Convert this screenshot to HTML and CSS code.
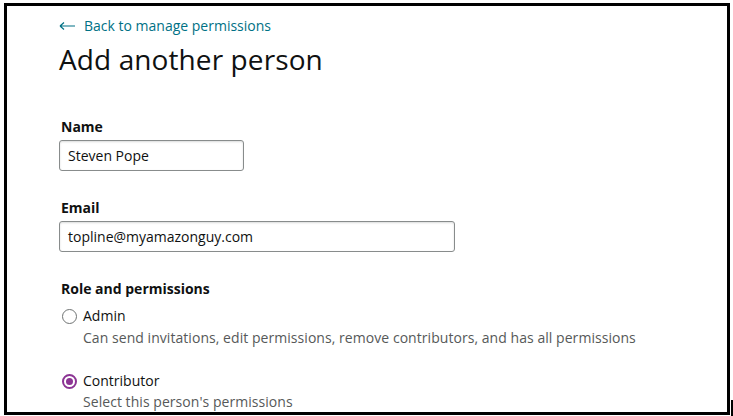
FILE: index.html
```html
<!DOCTYPE html>
<html>
<head>
<meta charset="utf-8">
<link rel="stylesheet" href="styles.css">
</head>
<body>
<div class="frame">
  <a class="back" href="#"><svg class="arrow" width="16" height="10" viewBox="0 0 16 10"><path d="M1 5H16M1 5L5 1.5M1 5L5 8.5" fill="none" stroke="#007185" stroke-width="1.2"/></svg>Back to manage permissions</a>
  <h1 class="title">Add another person</h1>
  <div class="field name-field">
    <label class="label">Name</label>
    <div class="input name-input">Steven Pope</div>
  </div>
  <div class="field email-field">
    <label class="label">Email</label>
    <div class="input email-input">topline@myamazonguy.com</div>
  </div>
  <div class="role">
    <div class="label">Role and permissions</div>
    <div class="option">
      <div class="option-row"><span class="radio"></span><span class="option-name">Admin</span></div>
      <div class="option-desc">Can send invitations, edit permissions, remove contributors, and has all permissions</div>
    </div>
    <div class="option option-second">
      <div class="option-row"><span class="radio checked"></span><span class="option-name">Contributor</span></div>
      <div class="option-desc desc-second">Select this person's permissions</div>
    </div>
  </div>
</div>
<div class="cursor-mark"></div>
</body>
</html>
```
FILE: styles.css
```css
* { box-sizing: border-box; }
html, body { margin: 0; padding: 0; background: #fff; }
body {
  width: 733px;
  height: 416px;
  overflow: hidden;
  position: relative;
  font-family: "Open Sans", "Noto Sans", sans-serif;
  color: #0f1111;
  padding: 3px 3px 1px 4px;
}
.frame {
  width: 726px;
  height: 412px;
  border: 3px solid #000;
  padding: 11px 0 0 52px;
  display: flex;
  flex-direction: column;
  overflow: hidden;
}
.back {
  color: #007185;
  text-decoration: none;
  font-size: 14px;
  line-height: 18px;
  display: flex;
  align-items: center;
}
.arrow { margin-right: 9px; }
.title {
  margin: 6px 0 0 0;
  font-size: 28px;
  font-weight: 400;
  line-height: 36px;
  letter-spacing: 0.1px;
}
.field { display: flex; flex-direction: column; }
.name-field { margin-top: 41px; }
.email-field { margin-top: 28px; }
.label {
  font-size: 14px;
  font-weight: 700;
  line-height: 18px;
  margin-left: 2px;
}
.input {
  margin-top: 4px;
  height: 31px;
  border: 1px solid #888c8c;
  border-radius: 3px;
  font-size: 14px;
  line-height: 29px;
  padding-left: 8px;
  box-shadow: 0 1px 2px rgba(15,17,17,.15) inset;
}
.name-input { width: 185px; }
.email-input { width: 396px; }
.role { margin-top: 28px; display: flex; flex-direction: column; }
.option { margin-top: 8px; }
.option-second { margin-top: 23px; }
.option-row { display: flex; align-items: center; gap: 6px; margin-left: 3px; }
.radio {
  width: 15px; height: 15px;
  border: 1px solid #6f7373;
  border-radius: 50%;
  display: inline-flex;
  align-items: center;
  justify-content: center;
}
.radio.checked { border-color: #8c3494; border-width: 2px; }
.radio.checked::after {
  content: "";
  width: 7px; height: 7px;
  border-radius: 50%;
  background: #8c3494;
}
.option-name { font-size: 14px; line-height: 20px; }
.option-desc {
  font-size: 14px;
  line-height: 20px;
  color: #565959;
  margin-left: 24px;
  margin-top: 2px;
  letter-spacing: 0.05px;
}
.desc-second { margin-top: 1px; }
.cursor-mark {
  position: absolute;
  left: 731px;
  top: 400px;
  width: 2px;
  height: 16px;
  background: #000;
}
```
